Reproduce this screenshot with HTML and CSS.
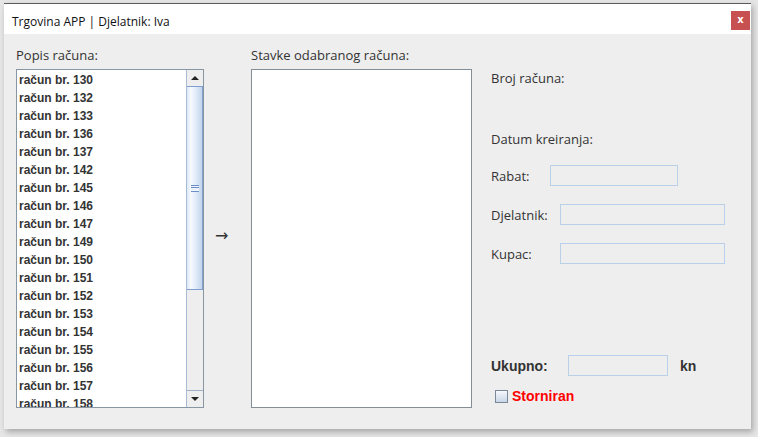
FILE: index.html
```html
<!DOCTYPE html>
<html>
<head>
<meta charset="utf-8">
<link rel="stylesheet" href="styles.css">
</head>
<body>
<div class="window">
  <div class="titlebar">
    <span class="title">Trgovina APP | Djelatnik: Iva</span>
    <div class="close">x</div>
  </div>
  <div class="content">
    <div class="col col-left">
      <div class="head">Popis računa:</div>
      <div class="listbox">
        <ul class="items">
          <li>račun br. 130</li>
          <li>račun br. 132</li>
          <li>račun br. 133</li>
          <li>račun br. 136</li>
          <li>račun br. 137</li>
          <li>račun br. 142</li>
          <li>račun br. 145</li>
          <li>račun br. 146</li>
          <li>račun br. 147</li>
          <li>račun br. 149</li>
          <li>račun br. 150</li>
          <li>račun br. 151</li>
          <li>račun br. 152</li>
          <li>račun br. 153</li>
          <li>račun br. 154</li>
          <li>račun br. 155</li>
          <li>račun br. 156</li>
          <li>račun br. 157</li>
          <li>račun br. 158</li>
        </ul>
        <div class="scrollbar">
          <div class="sb-btn"><span class="tri-up"></span></div>
          <div class="sb-thumb"><span class="grip"></span></div>
          <div class="sb-track"></div>
          <div class="sb-btn sb-btn-down"><span class="tri-down"></span></div>
        </div>
      </div>
    </div>
    <div class="col col-arrow"><span class="arrow">→</span></div>
    <div class="col col-mid">
      <div class="head">Stavke odabranog računa:</div>
      <div class="listbox empty"></div>
    </div>
    <div class="col col-right">
      <div class="row r-broj">Broj računa:</div>
      <div class="row r-datum">Datum kreiranja:</div>
      <div class="row r-field r-rabat"><span class="lbl w59">Rabat:</span><span class="field f128"></span></div>
      <div class="row r-field r-gap"><span class="lbl w69">Djelatnik:</span><span class="field f165"></span></div>
      <div class="row r-field r-gap"><span class="lbl w69">Kupac:</span><span class="field f165"></span></div>
      <div class="row r-field r-ukupno"><span class="lbl bold w77">Ukupno:</span><span class="field f100"></span><span class="bold kn">kn</span></div>
      <div class="row r-storn"><span class="checkbox"></span><span class="storn">Storniran</span></div>
    </div>
  </div>
</div>
</body>
</html>
```

FILE: styles.css
```css
html, body {
  margin: 0;
  padding: 0;
}
body {
  width: 758px;
  height: 437px;
  background: #e6e6e6;
  overflow: hidden;
  font-family: "Open Sans", "Noto Sans", sans-serif;
  color: #333;
}
.window {
  margin: 3px 0 0 4px;
  width: 747px;
  height: 425px;
  border-top: 1px solid #5c5c5c;
  box-shadow: 2px 3px 6px rgba(0,0,0,0.28);
  display: flex;
  flex-direction: column;
  background: #eeeeee;
}
.titlebar {
  height: 30px;
  flex: none;
  background: #ffffff;
  display: flex;
  align-items: flex-start;
  justify-content: space-between;
}
.title {
  font-size: 12px;
  line-height: 16px;
  margin: 10px 0 0 8px;
  color: #111;
}
.close {
  width: 19px;
  height: 19px;
  margin: 7px 1px 0 0;
  background: #c75050;
  color: #fff;
  font-family: "DejaVu Sans", sans-serif;
  font-weight: bold;
  font-size: 10px;
  line-height: 18px;
  text-align: center;
}
.content {
  flex: 1;
  display: flex;
  padding-left: 12px;
}
.col {
  display: flex;
  flex-direction: column;
}
.head {
  font-size: 13px;
  line-height: 18px;
  margin: 12px 0 5px 0;
  white-space: nowrap;
}
.col-left { width: 188px; }
.listbox {
  box-sizing: border-box;
  height: 339px;
  border: 1px solid #8896a3;
  background: #fff;
  display: flex;
}
.items {
  list-style: none;
  margin: 0;
  padding: 1px 0 0 2px;
  flex: 1;
  overflow: hidden;
  font-family: "Liberation Sans", Arial, sans-serif;
  font-weight: bold;
  font-size: 12px;
  color: #333;
}
.items li {
  height: 18px;
  line-height: 18px;
  white-space: nowrap;
}
.scrollbar {
  width: 16px;
  display: flex;
  flex-direction: column;
  background: #eeeeee;
  border-left: 1px solid #a9bcd6;
}
.sb-btn {
  height: 16px;
  background: #eeeeee;
  display: flex;
  align-items: center;
  justify-content: center;
}
.sb-btn-down {
  border-top: 1px solid #a2b2c6;
}
.tri-up {
  width: 0; height: 0;
  border-left: 4px solid transparent;
  border-right: 4px solid transparent;
  border-bottom: 4px solid #222;
}
.tri-down {
  width: 0; height: 0;
  border-left: 4px solid transparent;
  border-right: 4px solid transparent;
  border-top: 4px solid #222;
}
.sb-thumb {
  box-sizing: border-box;
  height: 204px;
  border: 1px solid #7f9fcf;
  border-left: none;
  background: linear-gradient(to right, #dbe7f6 0%, #f7faff 25%, #e3edf9 55%, #c3d6ef 100%);
  display: flex;
  align-items: center;
  justify-content: center;
}
.grip {
  width: 8px;
  height: 5px;
  border-top: 1px solid #6d8fc8;
  border-bottom: 1px solid #6d8fc8;
  background: linear-gradient(#eef3fb 0 1px, #6d8fc8 1px 2px, #eef3fb 2px);
}
.sb-track {
  flex: 1;
  background: #eeeeee;
}
.col-arrow {
  width: 47px;
  align-items: flex-start;
}
.arrow {
  margin-top: 193px;
  margin-left: 11px;
  font-family: "DejaVu Sans", sans-serif;
  font-size: 16px;
  line-height: 18px;
  color: #333;
}
.col-mid { width: 221px; }
.listbox.empty { border-color: #848e97; }
.col-right {
  margin-left: 19px;
  width: 240px;
  font-size: 13px;
}
.row {
  display: flex;
  align-items: center;
  line-height: 18px;
  white-space: nowrap;
}
.r-broj { margin-top: 35px; }
.r-datum { margin-top: 43px; }
.r-rabat { margin-top: 17px; }
.r-gap { margin-top: 18px; }
.r-ukupno { margin-top: 91px; }
.r-storn { margin-top: 11px; }
.lbl { display: inline-block; }
.w59 { width: 59px; }
.w69 { width: 69px; }
.w77 { width: 77px; }
.field {
  box-sizing: border-box;
  height: 21px;
  border: 1px solid #b9d0e8;
  background: #eeeeee;
  display: inline-block;
}
.f128 { width: 128px; }
.f165 { width: 165px; }
.f100 { width: 100px; }
.bold {
  font-family: "Liberation Sans", Arial, sans-serif;
  font-weight: bold;
  font-size: 14px;
  color: #333;
}
.kn { margin-left: 12px; }
.checkbox {
  box-sizing: border-box;
  width: 13px;
  height: 13px;
  margin-left: 4px;
  border: 1px solid #7a8898;
  background: linear-gradient(#f6f8fc, #c9d6e8);
}
.storn {
  margin-left: 4px;
  font-family: "Liberation Sans", Arial, sans-serif;
  font-weight: bold;
  font-size: 14px;
  color: #ff0000;
}
```
